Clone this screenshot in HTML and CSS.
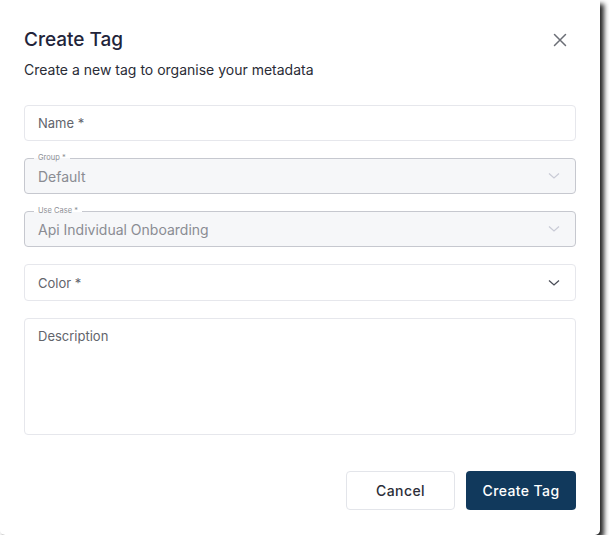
FILE: index.html
```html
<!DOCTYPE html>
<html>
<head>
<meta charset="utf-8">
<link rel="stylesheet" href="styles.css">
</head>
<body>
<div class="dialog">
  <div class="header">
    <h1 class="title">Create Tag</h1>
    <button class="close" aria-label="Close">
      <svg width="14" height="14" viewBox="0 0 14 14"><path d="M1.5 1.5 L12.5 12.5 M12.5 1.5 L1.5 12.5" stroke="#6b6e76" stroke-width="1.5" stroke-linecap="round" fill="none"/></svg>
    </button>
  </div>
  <p class="subtitle">Create a new tag to organise your metadata</p>
  <div class="form">
    <div class="field"><span class="placeholder">Name *</span></div>
    <div class="field disabled">
      <span class="float-label">Group *</span>
      <span class="value">Default</span>
      <svg class="chev" width="12" height="8" viewBox="0 0 12 8"><path d="M1 1.5 L6 6 L11 1.5" stroke="#c9cbd6" stroke-width="1.2" fill="none"/></svg>
    </div>
    <div class="field disabled">
      <span class="float-label">Use Case *</span>
      <span class="value">Api Individual Onboarding</span>
      <svg class="chev" width="12" height="8" viewBox="0 0 12 8"><path d="M1 1.5 L6 6 L11 1.5" stroke="#c9cbd6" stroke-width="1.2" fill="none"/></svg>
    </div>
    <div class="field select">
      <span class="placeholder">Color *</span>
      <svg class="chev" width="12" height="8" viewBox="0 0 12 8"><path d="M1 1.5 L6 6 L11 1.5" stroke="#4a4d57" stroke-width="1.3" fill="none"/></svg>
    </div>
    <div class="field textarea"><span class="placeholder">Description</span></div>
  </div>
  <div class="actions">
    <button class="btn cancel">Cancel</button>
    <button class="btn primary">Create Tag</button>
  </div>
</div>
</body>
</html>
```

FILE: styles.css
```css
html, body {
  margin: 0;
  padding: 0;
  background: #ffffff;
}
body {
  font-family: Inter, "Noto Sans", sans-serif;
  color: #23252f;
}
.dialog {
  box-sizing: border-box;
  width: 600px;
  height: 535px;
  background: #fff;
  border-radius: 0 0 5px 5px;
  box-shadow: 4px 4px 5px rgba(0, 0, 0, 0.85);
  padding: 28px 24px 25px 24px;
  display: flex;
  flex-direction: column;
}
.header {
  display: flex;
  align-items: center;
  justify-content: space-between;
  height: 24px;
}
.title {
  margin: 0;
  font-size: 19px;
  font-weight: 500;
  line-height: 24px;
  color: #22243a;
}
.close {
  background: none;
  border: 0;
  padding: 0;
  margin-right: 9px;
  display: flex;
}
.subtitle {
  margin: 10px 0 0 0;
  font-size: 14px;
  line-height: 16px;
  color: #2a2c36;
}
.form {
  margin-top: 27px;
  display: flex;
  flex-direction: column;
  gap: 17px;
}
.field {
  position: relative;
  box-sizing: border-box;
  height: 36px;
  border: 1px solid #e6e7ec;
  border-radius: 4px;
  display: flex;
  align-items: center;
  justify-content: space-between;
  padding: 0 13px;
  font-size: 13px;
}
.field.select {
  height: 37px;
}
.field.disabled {
  background: #f6f7f9;
  border-color: #c6c8cf;
}
.field.textarea {
  height: 117px;
  align-items: flex-start;
  padding-top: 9px;
}
.placeholder {
  color: #62646c;
}
.value {
  color: #8a8c93;
  font-size: 14px;
}
.float-label {
  position: absolute;
  top: -6px;
  left: 9px;
  padding: 0 4px;
  font-size: 7.5px;
  line-height: 10px;
  color: #8d8f96;
  background: linear-gradient(#fff 55%, #f6f7f9 55%);
}
.chev {
  margin-right: 2px;
}
.actions {
  margin-top: auto;
  display: flex;
  justify-content: flex-end;
  gap: 11px;
}
.btn {
  height: 39px;
  border-radius: 4px;
  font-family: Inter, "Noto Sans", sans-serif;
  font-size: 14px;
  font-weight: 500;
  letter-spacing: 0.4px;
  cursor: pointer;
}
.cancel {
  width: 109px;
  background: #fff;
  border: 1px solid #e3e5ea;
  color: #2c2e38;
}
.primary {
  width: 110px;
  background: #11395c;
  border: 0;
  color: #fff;
}
```
